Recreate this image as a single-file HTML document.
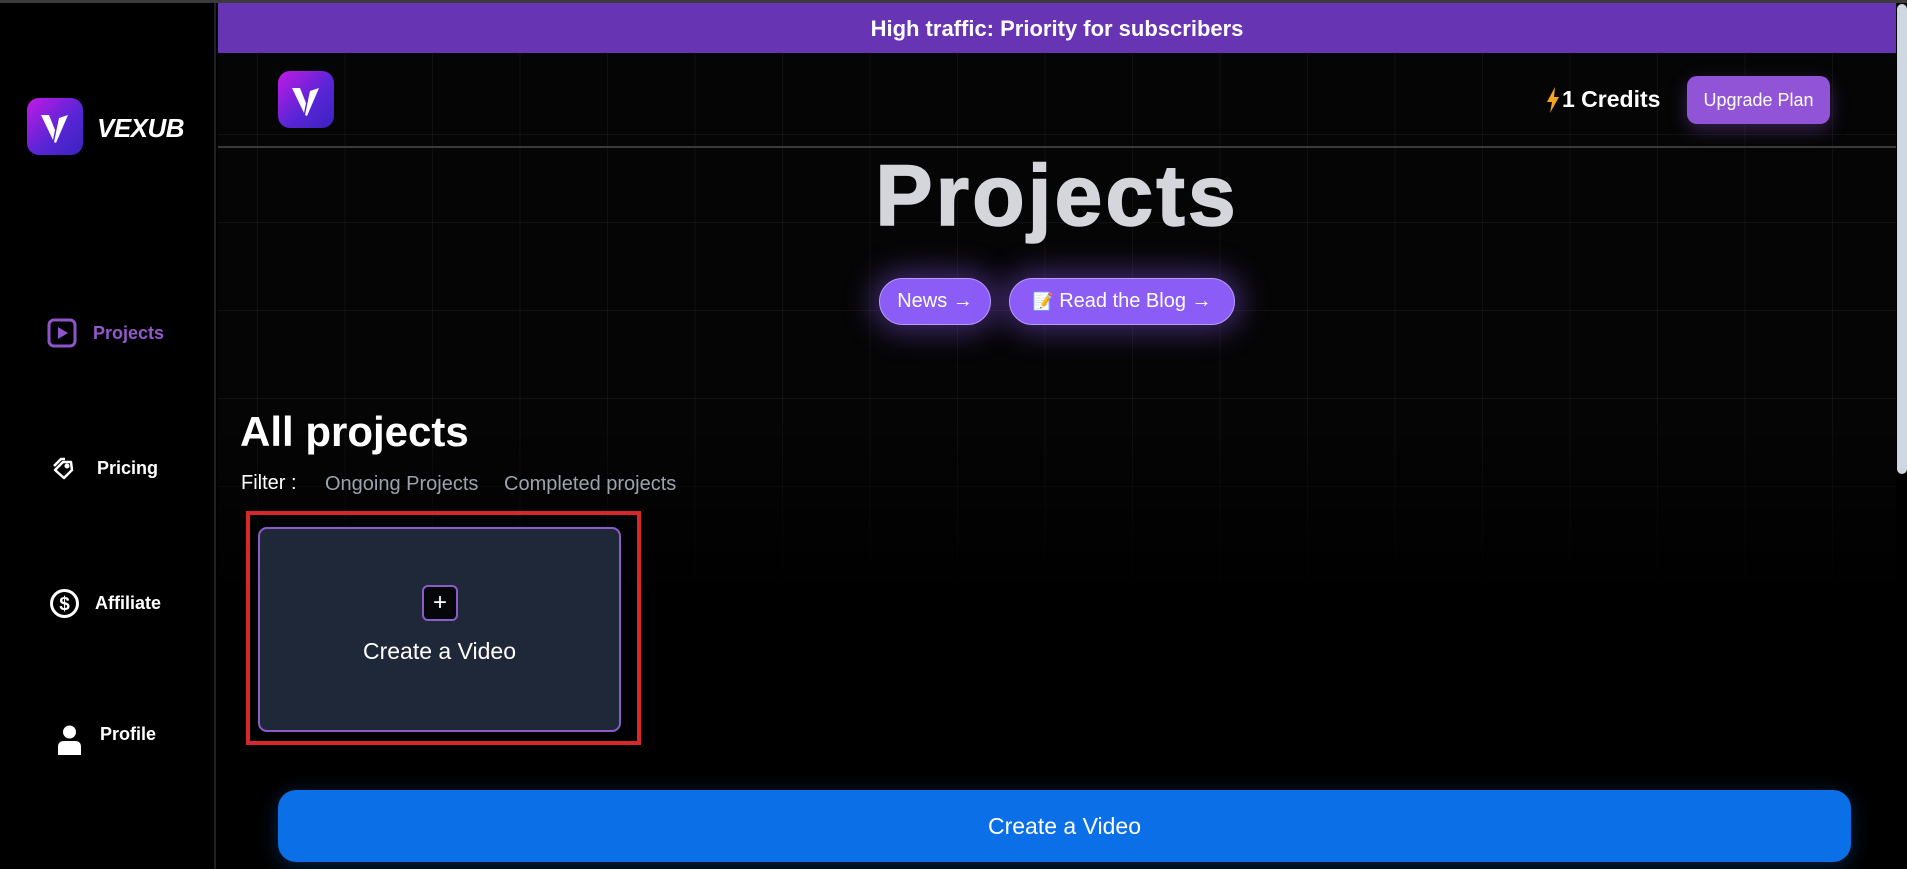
<!DOCTYPE html>
<html><head><meta charset="utf-8"><style>
*{margin:0;padding:0;box-sizing:border-box}
body{width:1907px;height:869px;overflow:hidden;background:#000;font-family:"Liberation Sans",Arial,sans-serif;position:relative;color:#fff}
.abs{position:absolute}
#topb{left:0;top:0;width:1907px;height:3px;background:#3b3b3e}
#side{left:0;top:3px;width:216px;height:866px;background:#000;border-right:2px solid #222}
#main{left:218px;top:3px;width:1678px;height:866px;background-color:#050505;
background-image:linear-gradient(90deg,rgba(255,255,255,0.045) 1px,transparent 1px),linear-gradient(rgba(255,255,255,0.045) 1px,transparent 1px);
background-size:87.5px 88px;background-position:39px 43px}
#fade{left:218px;top:420px;width:1678px;height:449px;background:linear-gradient(rgba(0,0,0,0),#000 40%)}
#banner{left:218px;top:3px;width:1678px;height:50px;background:#6734b4;text-align:center;font-weight:bold;font-size:22px;line-height:52px}
#hline{left:218px;top:146px;width:1678px;height:2px;background:#3a3a3a}
.logo{border-radius:12px;background:linear-gradient(135deg,#c21ae6,#5a25d6 55%,#3a22c0)}
.nav{position:absolute;font-weight:bold;font-size:18px}
#scroll{left:1896px;top:3px;width:11px;height:866px;background:#000}
#thumb{left:1897px;top:4px;width:10px;height:470px;background:#cfd8e0;border-radius:5px}
.pill{position:absolute;top:278px;height:47px;border-radius:24px;background:#8b5cf6;border:1px solid #b79cf9;font-size:20px;line-height:45px;text-align:center;box-shadow:0 0 30px 6px rgba(139,92,246,.45)}
</style></head><body>
<div class="abs" id="main"></div>
<div class="abs" id="fade"></div>
<div class="abs" id="topb"></div>
<div class="abs" id="side"></div>
<div class="abs logo" style="left:27px;top:98px;width:56px;height:57px"></div>
<svg class="abs" style="left:27px;top:98px" width="56" height="57" viewBox="0 0 56 57"><path d="M14 17 L22 17 L28 32 L26 42 Z M32 20 L41 17 L29 45 L27 44 Z" fill="#fff"/></svg>
<div class="abs" style="left:97px;top:113px;font-size:26px;font-weight:bold;font-style:italic;letter-spacing:-0.5px">VEXUB</div>

<svg class="abs" style="left:47px;top:318px" width="30" height="30" viewBox="0 0 30 30"><rect x="2" y="2" width="26" height="26" rx="5" fill="none" stroke="#8e55c9" stroke-width="3"/><path d="M11 9 L21 15 L11 21Z" fill="#8e55c9"/></svg>
<div class="nav" style="left:93px;top:323px;color:#9358cc">Projects</div>
<svg class="abs" style="left:51px;top:455px" width="26" height="26" viewBox="0 0 26 26" fill="none" stroke="#fff" stroke-width="2.5" stroke-linejoin="round"><path d="M3 11 L10 4 L14 4"/><path d="M4 15 L12 7 L20 7 L21 15 L13 23 Z"/><circle cx="16" cy="11" r="1.3" fill="#fff"/></svg>
<div class="nav" style="left:97px;top:458px">Pricing</div>
<svg class="abs" style="left:49px;top:588px" width="31" height="31" viewBox="0 0 31 31"><circle cx="15.5" cy="15.5" r="13" fill="none" stroke="#fff" stroke-width="3"/><text x="15.5" y="22" text-anchor="middle" font-family="Liberation Sans" font-weight="bold" font-size="19" fill="#fff">$</text></svg>
<div class="nav" style="left:95px;top:593px">Affiliate</div>
<svg class="abs" style="left:58px;top:725px" width="23" height="30" viewBox="0 0 23 30"><circle cx="11.5" cy="7" r="6.5" fill="#fff"/><path d="M0 30 L0 22 Q0 16 6 16 L17 16 Q23 16 23 22 L23 30Z" fill="#fff"/></svg>
<div class="nav" style="left:100px;top:724px">Profile</div>

<div class="abs" id="banner">High traffic: Priority for subscribers</div>
<div class="abs logo" style="left:278px;top:71px;width:56px;height:57px"></div>
<svg class="abs" style="left:278px;top:71px" width="56" height="57" viewBox="0 0 56 57"><path d="M14 17 L22 17 L28 32 L26 42 Z M32 20 L41 17 L29 45 L27 44 Z" fill="#fff"/></svg>
<div class="abs" id="hline"></div>
<svg class="abs" style="left:1546px;top:87px" width="14" height="26" viewBox="0 0 14 26"><path d="M9 0 L1 15 L6 15 L4 26 L13 10 L8 10 Z" fill="#f5a623"/></svg>
<div class="abs" style="left:1562px;top:86px;font-size:23px;font-weight:bold">1 Credits</div>
<div class="abs" style="left:1687px;top:76px;width:143px;height:48px;border-radius:10px;background:#9254d6;font-size:18px;line-height:48px;text-align:center;box-shadow:0 6px 18px rgba(146,84,214,.35)">Upgrade Plan</div>

<div class="abs" style="left:218px;top:146px;width:1678px;text-align:center;font-size:86px;font-weight:bold;color:#d4d6db;line-height:100px;letter-spacing:3px;-webkit-text-stroke:1.5px #d4d6db">Projects</div>
<div class="pill" style="left:879px;width:112px">News →</div>
<div class="pill" style="left:1009px;width:226px"><span style="font-size:17px">📝</span> Read the Blog →</div>

<div class="abs" style="left:240px;top:408px;font-size:42px;font-weight:bold">All projects</div>
<div class="abs" style="left:241px;top:472px;font-size:20px">Filter :</div>
<div class="abs" style="left:325px;top:473px;font-size:20px;color:#9ca3af">Ongoing Projects</div>
<div class="abs" style="left:504px;top:473px;font-size:20px;color:#9ca3af">Completed projects</div>

<div class="abs" style="left:246px;top:511px;width:395px;height:234px;border:4px solid #d9262b"></div>
<div class="abs" style="left:258px;top:527px;width:363px;height:205px;border:2px solid #8b5cc9;border-radius:9px;background:#1f2838"></div>
<div class="abs" style="left:422px;top:585px;width:36px;height:36px;border:2px solid #8b5cc9;border-radius:6px;background:#05060a;text-align:center;font-size:24px;line-height:31px">+</div>
<div class="abs" style="left:258px;top:638px;width:363px;text-align:center;font-size:23px">Create a Video</div>

<div class="abs" style="left:278px;top:790px;width:1573px;height:72px;border-radius:18px;background:#0b70e8;text-align:center;font-size:23px;line-height:72px;box-shadow:0 4px 20px rgba(11,112,232,.3)">Create a Video</div>

<div class="abs" id="scroll"></div>
<div class="abs" id="thumb"></div>
</body></html>
